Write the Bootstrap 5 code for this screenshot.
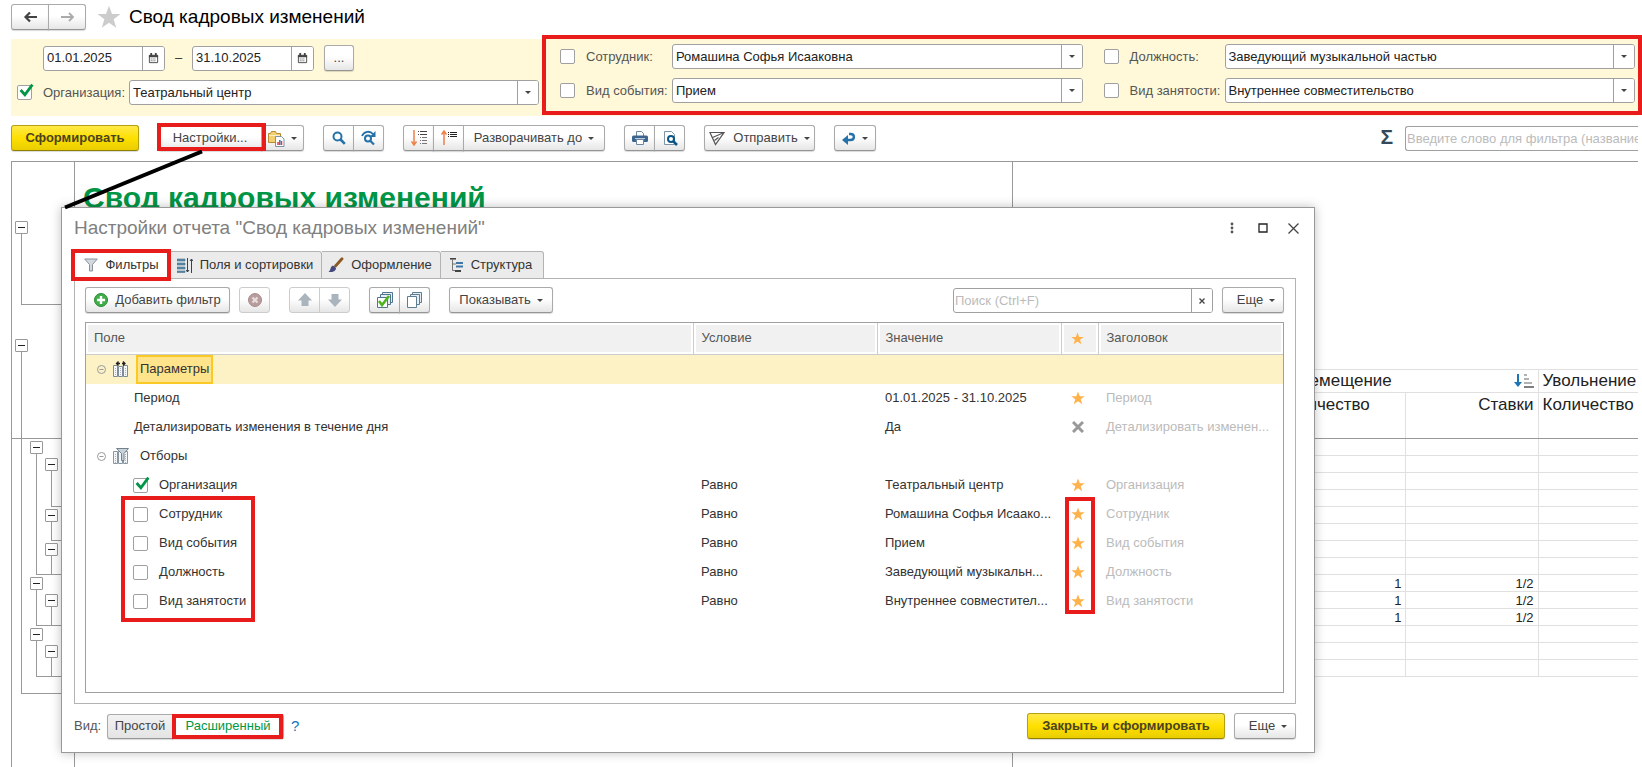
<!DOCTYPE html>
<html lang="ru">
<head>
<meta charset="utf-8">
<meta name="viewport" content="width=device-width, initial-scale=1">
<title>Свод кадровых изменений</title>
<link href="https://cdn.jsdelivr.net/npm/bootstrap@5.3.0/dist/css/bootstrap.min.css" rel="stylesheet">
<style>
body{font-family:"Liberation Sans",Arial,sans-serif;font-size:13px;line-height:16px;color:#333;background:#fff;overflow:hidden}
.page{min-height:100vh;padding-left:11px;padding-right:4px;position:relative}
.ttl{font-size:19px;line-height:24px;color:#000;margin:0;font-weight:400}
svg{display:block;flex:none}
/* buttons */
.b1{height:26px;border:1px solid #aaa;border-bottom-color:#959595;border-radius:3px;background:linear-gradient(#fff,#fff 45%,#e6e6e6);color:#444;font-size:13px;line-height:16px;padding:0;display:inline-flex;align-items:center;justify-content:center;white-space:nowrap;box-shadow:0 1px 1px rgba(0,0,0,.15)}
.b1.ic{width:31px}
.b1:disabled{border-color:#ccc;box-shadow:none;color:#444}
.joined{display:flex}
.joined .b1+.b1{margin-left:-1px;border-top-left-radius:0;border-bottom-left-radius:0}
.joined .b1:not(:last-child){border-top-right-radius:0;border-bottom-right-radius:0}
.go{background:linear-gradient(#ffe94a,#ffe000 50%,#e9cd00);border-color:#b3a010;border-bottom-color:#8f8000;font-weight:700;color:#4a4320}
.car{width:0;height:0;border:3px solid transparent;border-top-color:#444;border-bottom:0;margin-left:6px}
.sep{margin-left:19px}
.sep-s{margin-left:9px}
.w-nav{width:38px}
.w-dots{width:30px;margin-left:10px}
.w-go{width:128px}
.w-set{width:104px}
.b1.w-var{width:43px;justify-content:flex-end;padding-right:6px}
.w-exp{width:142px}
.w-send{width:111px}
.w-hist{width:42px}
.w-add{width:145px;gap:7px}
.w-show{width:104px}
.b1.w-more{width:62px;padding-left:6px}
.w-close{width:198px}
/* fields */
.fld{display:flex;height:25px;border:1px solid #a0a0a0;border-radius:3px;background:#fff;overflow:hidden}
.fld input{border:0;flex:1;min-width:0;padding:0 3px;font-size:13px;color:#222;background:none;outline:0}
.fld input::placeholder{color:#bbb}
.fld button{border:0;border-left:1px solid #a0a0a0;background:#fff;width:21px;padding:0;display:flex;align-items:center;justify-content:center;color:#444}
.fld .car{margin:0}
.date{width:122px}
.date button{width:22px}
.dash{width:27px}
.find{width:260px;margin-top:1px}
.sift{width:233px;margin-top:1px;border-right:0;border-radius:3px 0 0 3px}
.find input,.fld.sift input{padding:0 0 0 1px}
.chk{appearance:none;width:15px;height:15px;border:1px solid #a0a0a0;border-radius:2px;background:#fff;margin:0;position:relative;flex:none}
.chk:checked::after{content:"";position:absolute;left:1px;top:-3px;width:15px;height:15px;background:url("data:image/svg+xml,%3Csvg xmlns='http://www.w3.org/2000/svg' viewBox='0 0 14 14'%3E%3Cpath d='M1.500 6.500 5.500 11 12.500 1.500' fill='none' stroke='%23009646' stroke-width='2.600'/%3E%3C/svg%3E")}
.lab{color:#555}
.frow{display:flex;align-items:center}
.frow label{width:86px;margin-left:11px}
/* filter band */
.band{height:77px;margin-top:9px;background:#fff9da}
.band-l{width:531px;padding:6px 3px 0 6px;display:flex;flex-direction:column;gap:9px}
.dates{padding-left:26px}
.red{border:4px solid #e91c1c}
.band-r{margin:-4px -4px 0 0;height:80px;padding:5px 3px 0 14px;flex:1;background:#fff9da}
.fcol{display:flex;flex-direction:column;gap:9px;flex:1 1 0}
.fcol+.fcol{flex-basis:9px;margin-left:21px}
.fcol+.fcol label{width:95px}
.hl{position:relative}
.hl::after{content:"";position:absolute;border:4px solid #e91c1c;pointer-events:none;z-index:2}
.hl-set::after{inset:-3px -5px -1px -2px}
.hl-tab::after{inset:-3px -1px -3px -4px}
.hl-adv::after{inset:-1px 0 -1px -1px}
.bar1{margin-top:9px;height:27px}
.sigma{font:700 21px/24px "Liberation Sans",Arial,sans-serif;color:#34495a;margin-right:12px}
.fav{color:#ccc;margin:0 8px 0 11px}
/* report */
.report{margin-top:9px;border-top:1px solid #999;border-left:1px solid #999;flex:1}
.gut{width:63px;flex:none;border-right:1px solid #999;background:linear-gradient(#999,#999) 0 276px/100% 1px no-repeat;padding-left:3px;padding-top:59px}
.g button{display:block;width:13px;height:13px;border:1px solid #999;border-radius:1px;background:#fff;padding:0;position:relative}
.g button::after{content:"";position:absolute;left:2px;right:2px;top:5px;height:1px;background:#222}
.g{margin-top:2px;margin-left:8px}
.gut>.g{margin-left:0}
.gut>.g:first-child{margin-top:0}
.gb{margin-left:6px;border-left:1px solid #999;border-bottom:1px solid #999;display:flow-root}
.gb>.g:first-child{margin-top:4px}
.gb>.g:last-child{margin-bottom:-1px}
.h1r{height:71px}.h2r{height:36px}.h3r{height:19px}
.root{padding-bottom:17px}
.gb.root>.g:first-child{margin-top:89px}
.gut>.g+.g{margin-top:34px}
.pane{width:938px;flex:none;border-right:1px solid #999}
.pane h2{font-size:30px;line-height:34px;font-weight:700;color:#009646;margin:19px 0 0 8px}
.rest{min-width:0}
.sheet{margin-top:207px;table-layout:fixed;width:100%;border-collapse:collapse;color:#222}
.sheet td,.sheet th{border:1px solid #e0e0e0;padding:0 4px;height:17px;line-height:15px;text-align:right}
.sheet th{font-weight:400;font-size:17px;line-height:22px;height:23px;text-align:left;vertical-align:top;white-space:nowrap}
.sheet tr.low th{height:46px;border-bottom-color:#999;line-height:24px}
.sheet tr>:last-child{border-right:0}
.s-col{width:132px}.s-end{width:100px}
/* dialog */
.dlg{position:absolute;left:61px;right:327px;top:207px;border:1px solid #999;background:#fff;box-shadow:0 0 10px rgba(0,0,0,.25);padding:0 18px 13px 12px;z-index:3}
.dlg .ttl{color:#808080}
.dhead{padding-top:8px;margin-right:-13px}
.wb{border:0;background:none;padding:0;width:31px;height:24px;display:flex;align-items:center;justify-content:center}
.tabs{height:28px;margin-bottom:-1px;margin-top:11px;position:relative}
.tabs button{height:28px;border:1px solid #b3b3b3;border-left:0;border-radius:0 3px 0 0;background:#ebebeb;color:#333;font-size:13px;padding:0 2px 0 0;display:flex;align-items:center;justify-content:center;gap:7px}
.tabs .tb1{background:#fff;width:97px;border-bottom-color:#fff;border-left:1px solid #b3b3b3}
.tb2{width:151px}.tb3{width:119px}.tb4{width:103px}
.panel{border:1px solid #b3b3b3;padding:8px 11px 10px 10px}
.tbox{border:1px solid #a0a0a0;min-height:371px;margin-top:9px;position:relative}
.grid{width:100%;table-layout:fixed;border-collapse:collapse;margin:0}
.grid th{height:31px;background:#f1f1f1;font-weight:400;color:#555;border-right:1px solid #ccc;border-bottom:1px solid #ccc;padding:0 8px;box-shadow:inset 0 0 0 2px #fff}
.grid th:last-child{border-right:0}
.grid td{height:29px;padding:0 0 0 8px;white-space:nowrap}
.grid td:last-child{color:#bbb}
.grid tr>:nth-child(4){padding:0 4px 0 0}
.grid tr>:nth-child(4) svg{margin:0 auto;color:#ffb14a}
.grid .sel td{background:#fdf1c6}
.c-mid{width:184px}.c-star{width:37px}.c-end{width:185px}
.node{display:flex;align-items:center;padding-left:3px;gap:7px}
.node span{padding:0 4px}
.node .pick{background:#ffe48c;border:2px solid #fbc926;height:29px;padding:0 2px;display:flex;align-items:center}
.in1{padding-left:40px}
.in2{padding-left:39px;gap:11px}
.mk{position:absolute;pointer-events:none}
.mk-a{left:35px;top:173px;width:134px;height:126px}
.mk-b{right:188px;top:174px;width:30px;height:117px}
.foot{margin-top:9px}
.foot .lab{width:33px}
.help{color:#1b73b8;margin-left:7px;font-size:15px}
.b1.sm{background:linear-gradient(#f2f2f2,#e4e4e4);width:66px;height:25px}
.b1.adv{width:112px;height:25px;color:#009646;background:#fff}
.line{position:absolute;left:61px;top:150px;z-index:4;pointer-events:none}
.exp{border:0;background:none;padding:0;width:9px;height:16px;display:flex;align-items:center}
</style>
</head>
<body>
<svg width="0" height="0" class="position-absolute" aria-hidden="true">
<symbol id="star" viewBox="0 0 16 16"><path fill="currentColor" d="M8 .5 10 6h5.700l-4.600 3.500 1.700 5.700L8 11.800l-4.800 3.400 1.700-5.700L.3 6H6z"/></symbol>
<symbol id="cal" viewBox="0 0 12 12"><path fill="none" stroke="#444" d="M1.500 2.500h9v8h-9z"/><path stroke="#444" stroke-width="2" d="M1 3.500h10M3.500 0v3M8.500 0v3"/><path stroke="#444" stroke-dasharray="1 1" d="M3 6.500h6M3 8.500h6"/></symbol>
<symbol id="up" viewBox="0 0 16 16"><path fill="#aab4bc" d="M8 1 15 8.500h-3.500V14h-7V8.500H1z"/></symbol>
</svg>
<div class="page d-flex flex-column">
  <header class="d-flex align-items-center pt-1">
    <div class="joined">
      <button class="b1 w-nav" aria-label="Назад"><svg width="15" height="12" viewBox="0 0 15 12"><path d="M14 6H3M7 1.500 2.500 6 7 10.500" fill="none" stroke="#444" stroke-width="2.200"/></svg></button>
      <button class="b1 w-nav" aria-label="Вперед"><svg width="15" height="12" viewBox="0 0 15 12"><path d="M1 6h12M9 2l4 4-4 4" fill="none" stroke="#aaa" stroke-width="1.800"/></svg></button>
    </div>
    <svg class="fav" width="24" height="24"><use href="#star"/></svg>
    <h1 class="ttl">Свод кадровых изменений</h1>
  </header>

  <section class="band d-flex">
    <div class="band-l">
      <div class="dates d-flex align-items-center">
        <div class="fld date"><input value="01.01.2025" aria-label="Начало периода"><button aria-label="Календарь"><svg width="11" height="11"><use href="#cal"/></svg></button></div>
        <span class="dash text-center">–</span>
        <div class="fld date"><input value="31.10.2025" aria-label="Конец периода"><button aria-label="Календарь"><svg width="11" height="11"><use href="#cal"/></svg></button></div>
        <button class="b1 w-dots">...</button>
      </div>
      <div class="frow">
        <input type="checkbox" class="chk" id="c0" checked aria-label="Организация">
        <label class="lab" for="f0">Организация:</label>
        <div class="fld flex-fill"><input id="f0" value="Театральный центр"><button aria-label="Выбрать"><span class="car"></span></button></div>
      </div>
    </div>
    <div class="band-r red d-flex">
      <div class="fcol">
        <div class="frow"><input type="checkbox" class="chk" aria-label="Сотрудник"><label class="lab" for="f1">Сотрудник:</label><div class="fld flex-fill"><input id="f1" value="Ромашина Софья Исааковна"><button aria-label="Выбрать"><span class="car"></span></button></div></div>
        <div class="frow"><input type="checkbox" class="chk" aria-label="Вид события"><label class="lab" for="f2">Вид события:</label><div class="fld flex-fill"><input id="f2" value="Прием"><button aria-label="Выбрать"><span class="car"></span></button></div></div>
      </div>
      <div class="fcol">
        <div class="frow"><input type="checkbox" class="chk" aria-label="Должность"><label class="lab" for="f3">Должность:</label><div class="fld flex-fill"><input id="f3" value="Заведующий музыкальной частью"><button aria-label="Выбрать"><span class="car"></span></button></div></div>
        <div class="frow"><input type="checkbox" class="chk" aria-label="Вид занятости"><label class="lab" for="f4">Вид занятости:</label><div class="fld flex-fill"><input id="f4" value="Внутреннее совместительство"><button aria-label="Выбрать"><span class="car"></span></button></div></div>
      </div>
    </div>
  </section>

  <div class="bar1 d-flex align-items-start">
    <button class="b1 go w-go">Сформировать</button>
    <div class="joined sep">
      <button class="b1 hl hl-set w-set">Настройки...</button>
      <button class="b1 w-var" aria-label="Варианты отчета"><svg width="17" height="17" viewBox="0 0 17 17"><path fill="#f3cf73" stroke="#b98a2e" d="M.5 3.500h2l1-2h4l1 2h4v9H.5z"/><path stroke="#fff" stroke-opacity=".6" d="M1 5.500h11"/><path fill="#fff" stroke="#7d93a5" d="M7.500 6.500h6l2.500 2.500v7.500H7.500z"/><path stroke="#e33" stroke-width="1.500" d="M10 15v-3M13.500 15v-4"/><path stroke="#37b" stroke-width="1.500" d="M11.800 15v-5"/></svg><span class="car"></span></button>
    </div>
    <div class="joined sep">
      <button class="b1 ic" aria-label="Найти"><svg width="14" height="14" viewBox="0 0 14 14" fill="none" stroke="#2572a8"><circle cx="5.500" cy="5.500" r="4" stroke-width="2"/><path stroke-width="2.600" d="m8.500 8.500 4.300 4.300"/></svg></button>
      <button class="b1 ic" aria-label="Найти далее"><svg width="16" height="16" viewBox="0 0 16 16" fill="none" stroke="#2572a8"><circle cx="7" cy="8.500" r="3" stroke-width="2"/><path stroke-width="2.200" d="m9.500 11 3.500 3.500"/><path stroke-width="1.800" d="M1 6C3 1 9 .5 12 4"/><path fill="#2572a8" stroke="none" d="M14.500 1v6h-6z"/></svg></button>
    </div>
    <div class="joined sep">
      <button class="b1 ic" aria-label="Развернуть"><svg width="16" height="16" viewBox="0 0 16 16" fill="none"><path stroke="#f08048" stroke-width="1.500" d="M3 0v14M.5 11.500 3 15l2.500-3.500"/><path stroke="#444" stroke-dasharray="1 1 7 9" d="M7 1.500h9M7 4.500h9"/><path stroke="#777" stroke-dasharray="1 1 5 9" d="M9 7.500h7M9 10.500h7M9 13.500h7"/></svg></button>
      <button class="b1 ic" aria-label="Свернуть"><svg width="16" height="16" viewBox="0 0 16 16" fill="none"><path stroke="#f08048" stroke-width="1.500" d="M3 15V2M.5 4.500 3 1l2.500 3.500"/><path stroke="#222" stroke-dasharray="1 1 7 9" d="M7 2.500h9M7 4.500h9M7 6.500h9"/></svg></button>
      <button class="b1 w-exp">Разворачивать до<span class="car"></span></button>
    </div>
    <div class="joined sep">
      <button class="b1 ic" aria-label="Печать"><svg width="16" height="16" viewBox="0 0 16 16"><path fill="#fff" stroke="#6b88a3" d="M4.500 6V1.500h5l2 2V6"/><rect x="0" y="5.500" width="16" height="6.500" rx="1.500" fill="#3c6690"/><path stroke="#b9cadb" d="M3 8.500h10"/><path fill="#fff" stroke="#6b88a3" d="M4.500 9.500h7v5h-7z"/></svg></button>
      <button class="b1 ic" aria-label="Просмотр"><svg width="16" height="16" viewBox="0 0 16 16" fill="none"><path fill="#fff" stroke="#7e93a5" d="M2.500 14.500V1.500h7l3 3v10z"/><circle cx="9" cy="9" r="3" fill="#fff" stroke="#0a5585" stroke-width="2"/><path stroke="#0a5585" stroke-width="2.500" d="m11 11 4 4"/></svg></button>
    </div>
    <button class="b1 sep w-send"><svg class="me-2" width="16" height="15" viewBox="0 0 16 15" fill="none" stroke="#555" stroke-width="1.200"><path d="M1 1.500h14L6.500 13.500z"/><path d="M3.500 6.500 14 2M5.500 9.500l4-3"/></svg>Отправить<span class="car"></span></button>
    <button class="b1 sep w-hist" aria-label="История"><svg width="14" height="13" viewBox="0 0 14 13"><path fill="none" stroke="#2572a8" stroke-width="2.400" d="M4 8h4.500C13 8 13 2 8.500 2H7"/><path fill="#2572a8" d="M0 8l6-5v10z"/></svg><span class="car"></span></button>
    <span class="sigma ms-auto">Σ</span>
    <div class="fld sift"><input placeholder="Введите слово для фильтра (название" aria-label="Фильтр"></div>
  </div>

  <main class="report d-flex">
    <div class="gut">
      <div class="g"><button aria-label="Свернуть"></button><div class="gb h1r"></div></div>
      <div class="g"><button aria-label="Свернуть"></button>
        <div class="gb root">
          <div class="g"><button aria-label="Свернуть"></button><div class="gb">
            <div class="g"><button aria-label="Свернуть"></button><div class="gb h2r"></div></div>
            <div class="g"><button aria-label="Свернуть"></button><div class="gb h3r"></div></div>
            <div class="g"><button aria-label="Свернуть"></button><div class="gb h3r"></div></div></div></div>
          <div class="g"><button aria-label="Свернуть"></button><div class="gb"><div class="g"><button aria-label="Свернуть"></button><div class="gb h3r"></div></div></div></div>
          <div class="g"><button aria-label="Свернуть"></button><div class="gb"><div class="g"><button aria-label="Свернуть"></button><div class="gb h3r"></div></div></div></div>
        </div></div>
    </div>
    <div class="pane"><h2>Свод кадровых изменений</h2></div>
    <div class="rest flex-fill">
      <table class="sheet">
        <colgroup><col><col class="s-col"><col class="s-col"><col class="s-end"></colgroup>
        <thead>
        <tr><th></th><th colspan="2"><div class="d-flex align-items-center justify-content-between">Перемещение<svg width="20" height="14" viewBox="0 0 20 14" fill="none"><path stroke="#1b73b8" stroke-width="2" d="M4 0v9"/><path fill="#1b73b8" d="M0 8h8l-4 5z"/><path stroke="#999" stroke-width="1.500" d="M10 1h3M10 5h5M10 9h8"/><path stroke="#555" stroke-width="1.500" d="M10 13h10"/></svg></div></th><th>Увольнение</th></tr>
        <tr class="low"><th></th><th>Количество</th><th class="text-end">Ставки</th><th>Количество</th></tr>
        </thead>
        <tbody>
        <tr><td><td><td><td></tr><tr><td><td><td><td></tr><tr><td><td><td><td></tr><tr><td><td><td><td></tr><tr><td><td><td><td></tr><tr><td><td><td><td></tr><tr><td><td><td><td></tr><tr><td><td><td><td></tr>
        <tr><td><td>1<td>1/2<td></tr><tr><td><td>1<td>1/2<td></tr><tr><td><td>1<td>1/2<td></tr>
        <tr><td><td><td><td></tr><tr><td><td><td><td></tr><tr><td><td><td><td></tr>
        </tbody>
      </table>
    </div>
  </main>

  <div class="dlg" role="dialog" aria-labelledby="dt">
    <div class="dhead d-flex align-items-center">
      <h2 class="ttl me-auto" id="dt">Настройки отчета "Свод кадровых изменений"</h2>
      <button class="wb" aria-label="Меню"><svg width="4" height="12" fill="#555"><circle cx="2" cy="2" r="1.400"/><circle cx="2" cy="6" r="1.400"/><circle cx="2" cy="10" r="1.400"/></svg></button>
      <button class="wb" aria-label="Развернуть"><svg width="10" height="10"><path fill="none" stroke="#222" stroke-width="1.300" d="M1 1h8v8H1z"/></svg></button>
      <button class="wb" aria-label="Закрыть"><svg width="11" height="11"><path stroke="#444" stroke-width="1.300" d="m.5.5 10 10m0-10-10 10"/></svg></button>
    </div>
    <div class="tabs d-flex" role="tablist">
      <button class="tb1 hl hl-tab" role="tab"><svg width="14" height="14" viewBox="0 0 14 14"><path fill="#d3d9de" stroke="#87929b" d="M.7 1h12.600L8.500 6.500V13h-3V6.500z"/></svg>Фильтры</button>
      <button class="tb2" role="tab"><svg width="16" height="15" viewBox="0 0 16 15"><path fill="#5b8cad" stroke="#47708c" stroke-width=".6" d="M0 1h8v2H0zM0 5h8v2H0zM0 9h8v2H0zM0 13h8v1.500H0z"/><path stroke="#345" fill="none" d="M10.500 0v14M9 12l1.500 2 1.500-2M14.500 15V1M13 3l1.500-2L16 3"/></svg>Поля и сортировки</button>
      <button class="tb3" role="tab"><svg width="16" height="16" viewBox="0 0 16 16"><path stroke="#8a5a22" stroke-width="2.800" stroke-linecap="round" d="M14 1.800 7.500 9"/><path fill="#45497e" d="M5 8.500 8 11c0 3.500-4 4.500-7.500 4C3 13.500 2 9.500 5 8.500z"/></svg>Оформление</button>
      <button class="tb4" role="tab"><svg width="14" height="15" viewBox="0 0 14 15"><path stroke="#444" d="M0 .8h6" stroke-width="1.600"/><path fill="none" stroke="#777" d="M2.500 1v11.500H6M2.500 6H6"/><path stroke="#3f77a6" stroke-width="2" d="M6 5h7M6 8.500h7"/><path stroke="#444" stroke-width="2" d="M5 13h6"/></svg>Структура</button>
    </div>
    <div class="panel">
      <div class="d-flex align-items-start">
        <button class="b1 w-add"><svg width="14" height="14" viewBox="0 0 14 14"><circle cx="7" cy="7" r="6.500" fill="#3fae49" stroke="#2a8a36"/><path stroke="#fff" stroke-width="2.400" d="M7 3v8M3 7h8"/></svg>Добавить фильтр</button>
        <button class="b1 ic sep-s" disabled aria-label="Удалить"><svg width="14" height="14" viewBox="0 0 14 14"><circle cx="7" cy="7" r="6.500" fill="#b99c9c" stroke="#a98c8c"/><path stroke="#e8dede" stroke-width="2.200" d="m4.500 4.500 5 5m0-5-5 5"/></svg></button>
        <div class="joined sep">
          <button class="b1 ic" disabled aria-label="Вверх"><svg width="16" height="16"><use href="#up"/></svg></button>
          <button class="b1 ic" disabled aria-label="Вниз"><svg width="16" height="16" viewBox="0 0 16 16"><use href="#up" transform="rotate(180 8 8)"/></svg></button>
        </div>
        <div class="joined sep">
          <button class="b1 ic" aria-label="Отметить все"><svg width="16" height="16" viewBox="0 0 16 16" stroke="#4f7590"><path fill="#e6eef3" d="M5.500.5h10v10h-10z"/><path fill="#e6eef3" d="M3.500 2.500h10v10h-10z"/><path fill="#fff" d="M.5 5.500h10v10H.5z"/><path fill="none" stroke="#4cb51e" stroke-width="2.600" d="m2 9 3 4 7-9"/></svg></button>
          <button class="b1 ic" aria-label="Снять отметки"><svg width="16" height="16" viewBox="0 0 16 16" stroke="#5d7d93"><path fill="#e6eef3" d="M5.500.5h9v10h-9z"/><path fill="#e6eef3" d="M3.500 2.500h9v10h-9z"/><path fill="#fff" d="M.5 4.500h9v11h-9z"/></svg></button>
        </div>
        <button class="b1 sep w-show">Показывать<span class="car"></span></button>
        <div class="fld find ms-auto"><input placeholder="Поиск (Ctrl+F)" aria-label="Поиск"><button aria-label="Очистить"><svg width="6" height="6"><path stroke="#444" stroke-width="1.300" d="m.5.5 5 5m0-5-5 5"/></svg></button></div>
        <button class="b1 sep-s w-more">Еще<span class="car"></span></button>
      </div>
      <div class="tbox">
        <table class="grid">
          <colgroup><col><col class="c-mid"><col class="c-mid"><col class="c-star"><col class="c-end"></colgroup>
          <thead><tr><th>Поле</th><th>Условие</th><th>Значение</th><th><svg width="13" height="13"><use href="#star"/></svg></th><th>Заголовок</th></tr></thead>
          <tbody>
            <tr class="sel"><td><div class="node"><button class="exp" aria-label="Свернуть"><svg width="9" height="9" fill="none" stroke="#999"><circle cx="4.500" cy="4.500" r="4"/><path d="M2.500 4.500h4"/></svg></button><svg width="16" height="16" viewBox="0 0 16 16"><path fill="#f4f7f9" stroke="#7e8b95" d="M.5 4.500h4v11h-4zM5.500 5.500h4v10h-4zM10.500 4.500h4v11h-4z"/><path stroke="#a9b4bc" stroke-dasharray="1 1" d="M2.500 7v8M7.500 7v8M12.500 7v8"/><path stroke="#222" stroke-width="1.300" fill="none" d="M5.500.5 3.500 2.500l2 2M10 .5l2 2-2 2M4 2.500h3M9 2.500h3"/></svg><span class="pick">Параметры</span></div></td><td></td><td></td><td></td><td></td></tr>
            <tr><td><div class="in1">Период</div></td><td></td><td>01.01.2025 - 31.10.2025</td><td><svg width="14" height="14"><use href="#star"/></svg></td><td>Период</td></tr>
            <tr><td><div class="in1">Детализировать изменения в течение дня</div></td><td></td><td>Да</td><td><svg width="12" height="12"><path stroke="#999" stroke-width="3" d="m1 1 10 10m0-10L1 11"/></svg></td><td>Детализировать изменен...</td></tr>
            <tr><td><div class="node"><button class="exp" aria-label="Свернуть"><svg width="9" height="9" fill="none" stroke="#999"><circle cx="4.500" cy="4.500" r="4"/><path d="M2.500 4.500h4"/></svg></button><svg width="16" height="16" viewBox="0 0 16 16"><path fill="#f4f7f9" stroke="#8a97a1" d="M.5 3.500h4v12h-4zM5.500 3.500h4v12h-4zM10.500 3.500h4v12h-4z"/><path stroke="#a9b4bc" stroke-dasharray="1 1" d="M2.500 6v9M12.500 6v9"/><path fill="#c9d2d8" stroke="#74828d" d="M3.500.5h12L11 5.500v7H8.500v-7z"/></svg><span>Отборы</span></div></td><td></td><td></td><td></td><td></td></tr>
            <tr><td><label class="in2 d-flex align-items-center"><input type="checkbox" class="chk" checked>Организация</label></td><td>Равно</td><td>Театральный центр</td><td><svg width="14" height="14"><use href="#star"/></svg></td><td>Организация</td></tr>
            <tr><td><label class="in2 d-flex align-items-center"><input type="checkbox" class="chk">Сотрудник</label></td><td>Равно</td><td>Ромашина Софья Исаако...</td><td><svg width="14" height="14"><use href="#star"/></svg></td><td>Сотрудник</td></tr>
            <tr><td><label class="in2 d-flex align-items-center"><input type="checkbox" class="chk">Вид события</label></td><td>Равно</td><td>Прием</td><td><svg width="14" height="14"><use href="#star"/></svg></td><td>Вид события</td></tr>
            <tr><td><label class="in2 d-flex align-items-center"><input type="checkbox" class="chk">Должность</label></td><td>Равно</td><td>Заведующий музыкальн...</td><td><svg width="14" height="14"><use href="#star"/></svg></td><td>Должность</td></tr>
            <tr><td><label class="in2 d-flex align-items-center"><input type="checkbox" class="chk">Вид занятости</label></td><td>Равно</td><td>Внутреннее совместител...</td><td><svg width="14" height="14"><use href="#star"/></svg></td><td>Вид занятости</td></tr>
          </tbody>
        </table>
        <div class="mk mk-a red"></div><div class="mk mk-b red"></div>
      </div>
    </div>
    <div class="foot d-flex align-items-center">
      <span class="lab">Вид:</span>
      <div class="joined"><button class="b1 sm">Простой</button><button class="b1 adv hl hl-adv">Расширенный</button></div>
      <a href="#" class="help text-decoration-none">?</a>
      <button class="b1 go ms-auto w-close">Закрыть и сформировать</button>
      <button class="b1 sep-s w-more">Еще<span class="car"></span></button>
    </div>
  </div>
  <svg class="line" width="145" height="62"><path stroke="#000" stroke-width="4" d="M4 57.500 141 1.500"/></svg>
</div>
<script src="https://cdn.jsdelivr.net/npm/bootstrap@5.3.0/dist/js/bootstrap.bundle.min.js"></script>
</body>
</html>
